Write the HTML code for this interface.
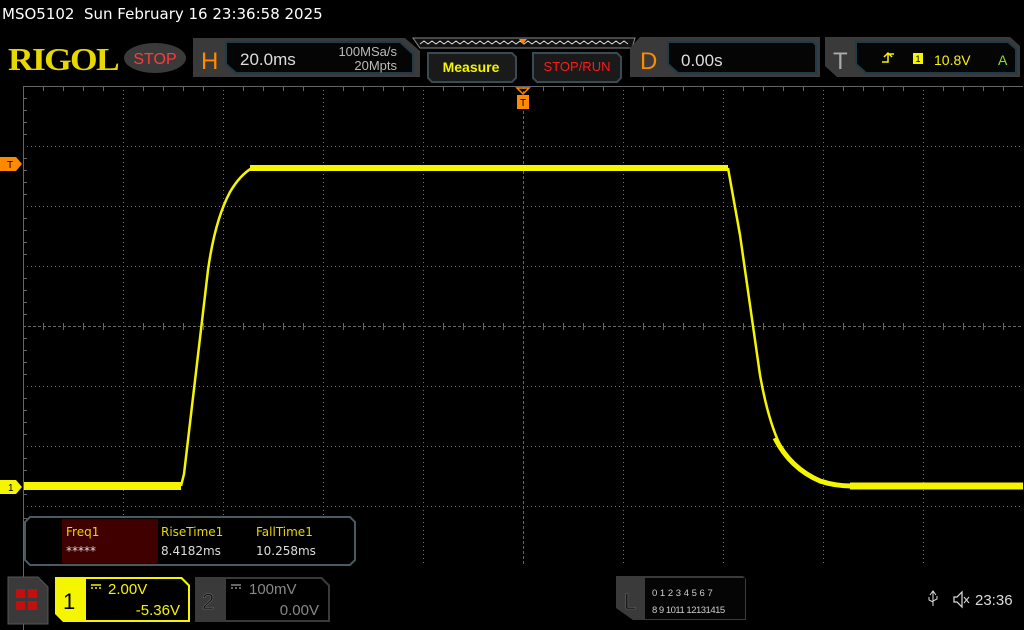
<!DOCTYPE html>
<html><head><meta charset="utf-8"><style>
html,body{margin:0;padding:0;background:#000;width:1024px;height:630px;overflow:hidden}
svg{display:block;font-family:"Liberation Sans",sans-serif}
</style></head><body>
<svg width="1024" height="630" viewBox="0 0 1024 630">
<rect width="1024" height="630" fill="#000"/>
<text x="2" y="19" fill="#fff" font-size="15" font-family="DejaVu Sans,sans-serif">MSO5102&#160; Sun February 16 23:36:58 2025</text>
<!-- logo -->
<text x="8" y="70" fill="#e8d800" font-size="32" font-weight="bold" font-family="Liberation Serif,serif" letter-spacing="-1.5" textLength="110" lengthAdjust="spacingAndGlyphs">RIGOL</text>
<ellipse cx="155" cy="58" rx="31" ry="15" fill="#3a3a3a"/>
<text x="155" y="64" fill="#ff3b3b" font-size="16" text-anchor="middle">STOP</text>
<!-- H panel -->
<path d="M193,38 H405 L420,51 V77 H193 Z" fill="#3a3a3a"/>
<path d="M226,42 H400 L413,54 V73 H236 L226,64 Z" fill="#050505" stroke="#1f3b4a" stroke-width="2"/>
<text x="201" y="69" fill="#ff8a00" font-size="24">H</text>
<text x="240" y="65" fill="#ddd" font-size="17">20.0ms</text>
<text x="397" y="56" fill="#bbb" font-size="13" text-anchor="end">100MSa/s</text>
<text x="397" y="70" fill="#bbb" font-size="13" text-anchor="end">20Mpts</text>
<!-- wave strip -->
<path d="M413,38 H635 L632,48 H420 Z" fill="#111" stroke="#888" stroke-width="1"/>
<polyline points="420,44 424,41 428,44 432,41 436,44 440,41 444,44 448,41 452,44 456,41 460,44 464,41 468,44 472,41 476,44 480,41 484,44 488,41 492,44 496,41 500,44 504,41 508,44 512,41 516,44 520,41 524,44 528,41 532,44 536,41 540,44 544,41 548,44 552,41 556,44 560,41 564,44 568,41 572,44 576,41 580,44 584,41 588,44 592,41 596,44 600,41 604,44 608,41 612,44 616,41 620,44 624,41 628,44" fill="none" stroke="#ddd" stroke-width="1"/>
<path d="M519,39 H527 L523,44 Z" fill="#ff8a00"/>
<!-- Measure -->
<path d="M428,53 H512 L516,57 V78 L512,82 H432 L428,78 Z" fill="#1a1a1a" stroke="#3a4a52" stroke-width="2"/>
<text x="471" y="72" fill="#f5f500" font-size="14" text-anchor="middle" font-weight="bold">Measure</text>
<path d="M533,53 H617 L621,57 V78 L617,82 H537 L533,78 Z" fill="#1a1a1a" stroke="#3a4a52" stroke-width="2"/>
<text x="577" y="71" fill="#ff1a1a" font-size="13" text-anchor="middle">STOP/RUN</text>
<!-- D panel -->
<path d="M640,37 H820 V77 H630 V48 Z" fill="#3a3a3a"/>
<path d="M668,42 H813 L816,45 V73 H678 L668,64 Z" fill="#050505" stroke="#1f3b4a" stroke-width="2"/>
<text x="640" y="69" fill="#ff8a00" font-size="24">D</text>
<text x="681" y="66" fill="#ddd" font-size="17">0.00s</text>
<!-- T panel -->
<path d="M825,37 H1010 L1020,46 V77 H837 L825,66 Z" fill="#3a3a3a"/>
<path d="M856,42 H1008 L1016,49 V73 H866 L856,64 Z" fill="#050505" stroke="#1f3b4a" stroke-width="2"/>
<text x="833" y="69" fill="#aaa" font-size="24">T</text>
<path d="M882,62 H888 V54 H894 M884,57 L888,53 L892,57" fill="none" stroke="#f5f500" stroke-width="1.5"/>
<rect x="913" y="53" width="10" height="11" fill="#f5f500"/>
<text x="918" y="62" fill="#000" font-size="9" text-anchor="middle">1</text>
<text x="934" y="65" fill="#f5f500" font-size="14">10.8V</text>
<text x="998" y="65" fill="#8ce02a" font-size="14">A</text>
<!-- grid -->
<g stroke="#777" stroke-width="1" stroke-dasharray="1,3" fill="none">
<path d="M123.5,86 V566 M223.5,86 V566 M323.5,86 V566 M423.5,86 V566 M623.5,86 V566 M723.5,86 V566 M823.5,86 V566 M923.5,86 V566"/>
<path d="M23,146.5 H1023 M23,206.5 H1023 M23,266.5 H1023 M23,386.5 H1023 M23,446.5 H1023 M23,506.5 H1023"/>
</g>
<g stroke="#666" stroke-width="1" fill="none">
<path d="M23.5,86 V630 M23,86.5 H1023"/>
<path d="M523.5,86 V566 M23,326.5 H1023" stroke-dasharray="3,2"/>
</g>
<g stroke="#666" stroke-width="1">
<path d="M43.5,86 v5 M63.5,86 v5 M83.5,86 v5 M103.5,86 v5 M143.5,86 v5 M163.5,86 v5 M183.5,86 v5 M203.5,86 v5 M243.5,86 v5 M263.5,86 v5 M283.5,86 v5 M303.5,86 v5 M343.5,86 v5 M363.5,86 v5 M383.5,86 v5 M403.5,86 v5 M443.5,86 v5 M463.5,86 v5 M483.5,86 v5 M503.5,86 v5 M543.5,86 v5 M563.5,86 v5 M583.5,86 v5 M603.5,86 v5 M643.5,86 v5 M663.5,86 v5 M683.5,86 v5 M703.5,86 v5 M743.5,86 v5 M763.5,86 v5 M783.5,86 v5 M803.5,86 v5 M843.5,86 v5 M863.5,86 v5 M883.5,86 v5 M903.5,86 v5 M943.5,86 v5 M963.5,86 v5 M983.5,86 v5 M1003.5,86 v5"/>
<path d="M23,98.5 h4 M23,110.5 h4 M23,122.5 h4 M23,134.5 h4 M23,158.5 h4 M23,170.5 h4 M23,182.5 h4 M23,194.5 h4 M23,218.5 h4 M23,230.5 h4 M23,242.5 h4 M23,254.5 h4 M23,278.5 h4 M23,290.5 h4 M23,302.5 h4 M23,314.5 h4 M23,338.5 h4 M23,350.5 h4 M23,362.5 h4 M23,374.5 h4 M23,398.5 h4 M23,410.5 h4 M23,422.5 h4 M23,434.5 h4 M23,458.5 h4 M23,470.5 h4 M23,482.5 h4 M23,494.5 h4 M23,518.5 h4 M23,530.5 h4 M23,542.5 h4 M23,554.5 h4"/>
<path d="M443.5,323 v7 M463.5,323 v7 M483.5,323 v7 M503.5,323 v7 M543.5,323 v7 M563.5,323 v7 M583.5,323 v7 M603.5,323 v7 M643.5,323 v7 M663.5,323 v7 M683.5,323 v7 M703.5,323 v7 M743.5,323 v7 M763.5,323 v7 M783.5,323 v7 M803.5,323 v7 M43.5,323 v7 M63.5,323 v7 M83.5,323 v7 M103.5,323 v7 M143.5,323 v7 M163.5,323 v7 M183.5,323 v7 M203.5,323 v7 M243.5,323 v7 M263.5,323 v7 M283.5,323 v7 M303.5,323 v7 M343.5,323 v7 M363.5,323 v7 M383.5,323 v7 M403.5,323 v7 M843.5,323 v7 M863.5,323 v7 M883.5,323 v7 M903.5,323 v7 M943.5,323 v7 M963.5,323 v7 M983.5,323 v7 M1003.5,323 v7"/>
</g>
<!-- trigger marker top -->
<path d="M517,88 H529 L523,94 Z" fill="none" stroke="#ff8a00" stroke-width="1.5"/>
<rect x="517" y="95" width="12" height="14" fill="#ff8a00"/>
<text x="523" y="106" fill="#000" font-size="10" text-anchor="middle">T</text>
<!-- left markers -->
<path d="M0,157 H16 L22,164 L16,171 H0 Z" fill="#ff8a00"/>
<text x="7" y="168" fill="#000" font-size="10">T</text>
<path d="M0,480 H16 L22,487 L16,494 H0 Z" fill="#f5f500"/>
<text x="8" y="491" fill="#000" font-size="10">1</text>
<!-- trace -->
<g fill="none" stroke="#f5f500" stroke-linejoin="round">
<path d="M24,486 H181" stroke-width="8"/>
<path d="M250,168 H728" stroke-width="6"/>
<path d="M850,486 H1023" stroke-width="7"/>
<path d="M181,486 L184,474 L208,270 Q215,220 230,192 Q240,175 252,168" stroke-width="2.5"/>
<path d="M728,168 L740,235 L760,375 Q768,420 780,445 Q795,472 820,481 Q835,486 852,486" stroke-width="2.5"/>
<path d="M775,438 Q790,468 820,481 Q835,486 852,486" stroke-width="5"/>
</g>
<!-- measurement box -->
<path d="M30,517 H350 L355,522 V560 L350,565 H30 L25,560 V522 Z" fill="#000" stroke="#4a5a62" stroke-width="2"/>
<rect x="62" y="519" width="96" height="44" fill="#400000"/>
<g font-size="12" font-family="DejaVu Sans,sans-serif">
<text x="66" y="536" fill="#e8d800">Freq1</text>
<text x="66" y="555" fill="#ddd">*****</text>
<text x="161" y="536" fill="#e8d800">RiseTime1</text>
<text x="161" y="555" fill="#ddd">8.4182ms</text>
<text x="256" y="536" fill="#e8d800">FallTime1</text>
<text x="256" y="555" fill="#ddd">10.258ms</text>
</g>
<!-- bottom -->
<path d="M8,577 H38 L48,587 V624 H8 Z" fill="#3a3a3a" stroke="#555"/>
<rect x="16" y="589" width="9" height="9" fill="#c01010"/><rect x="28" y="589" width="9" height="9" fill="#c01010"/>
<rect x="16" y="601" width="9" height="9" fill="#c01010"/><rect x="28" y="601" width="9" height="9" fill="#c01010"/>
<path d="M55,577 H182 L190,585 V622 H63 L55,614 Z" fill="#f5f500"/>
<path d="M86,579 H181 L188,586 V620 H86 Z" fill="#000"/>
<text x="63" y="609" fill="#000" font-size="22">1</text>
<path d="M91,585 h10 M91,588 h2 M95,588 h2 M99,588 h2" stroke="#f5f500" stroke-width="1.5"/>
<text x="108" y="594" fill="#f5f500" font-size="15">2.00V</text>
<text x="180" y="615" fill="#f5f500" font-size="15" text-anchor="end">-5.36V</text>
<path d="M195,577 H322 L330,585 V622 H195 Z" fill="#3a3a3a"/>
<path d="M226,579 H321 L328,586 V620 H226 Z" fill="#000"/>
<text x="202" y="609" fill="#111" font-size="22" stroke="#777" stroke-width="0.5">2</text>
<path d="M231,585 h10 M231,588 h2 M235,588 h2 M239,588 h2" stroke="#888" stroke-width="1.5"/>
<text x="249" y="594" fill="#888" font-size="15">100mV</text>
<text x="319" y="615" fill="#888" font-size="15" text-anchor="end">0.00V</text>
<path d="M616,576 H743 L746,579 V620 H633 L616,608 Z" fill="#3a3a3a"/>
<rect x="645" y="578" width="100" height="41" fill="#050505"/>
<text x="624" y="609" fill="#111" font-size="22" stroke="#666" stroke-width="0.6">L</text>
<text x="652" y="596" fill="#ccc" font-size="9.5">0 1 2 3  4 5 6 7</text>
<text x="652" y="613" fill="#ccc" font-size="9.5" letter-spacing="-0.5">8 9 1011 12131415</text>
<path d="M933,591 V606 M930,595 L933,591 L936,595 M929,597 V600 L933,602 M937,596 V599 L933,601" stroke="#ddd" stroke-width="1" fill="none"/>
<path d="M954,597 H957 L962,592 V607 L957,602 H954 Z" fill="none" stroke="#ddd" stroke-width="1.2"/>
<path d="M964,597 L969,603 M969,597 L964,603" stroke="#ddd" stroke-width="1"/>
<text x="975" y="605" fill="#ddd" font-size="15">23:36</text>
</svg>
</body></html>
